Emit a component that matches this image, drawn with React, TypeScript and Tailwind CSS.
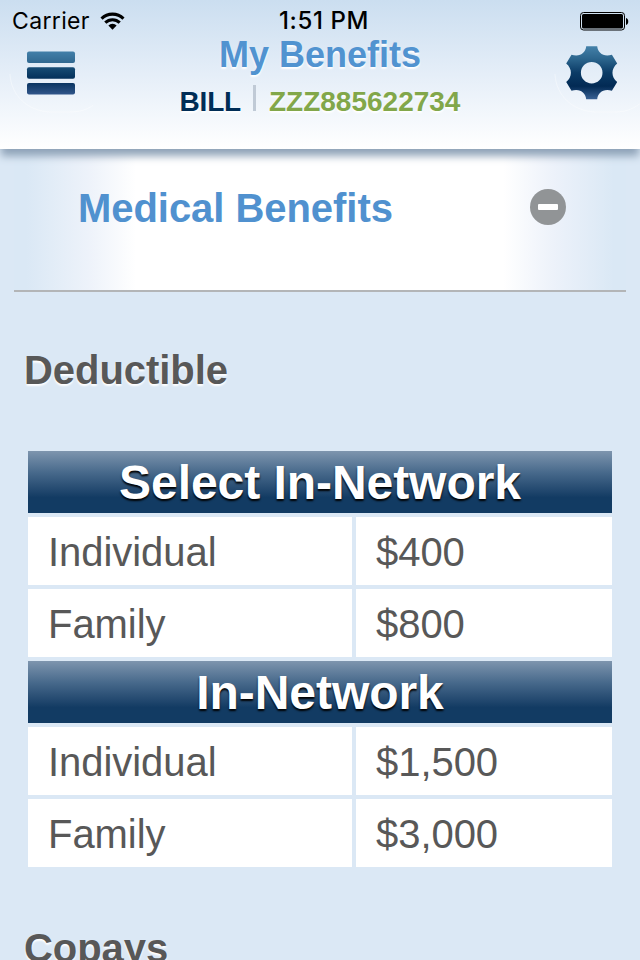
type Row = { label: string; value: string };

const groups: { title: string; rows: Row[] }[] = [
  {
    title: 'Select In-Network',
    rows: [
      { label: 'Individual', value: '$400' },
      { label: 'Family', value: '$800' },
    ],
  },
  {
    title: 'In-Network',
    rows: [
      { label: 'Individual', value: '$1,500' },
      { label: 'Family', value: '$3,000' },
    ],
  },
];

function StatusBar() {
  return (
    <div className="grid h-10 grid-cols-3 items-center pl-3 pr-2.5 font-['Inter',sans-serif] text-[23px] leading-10 text-black">
      <div className="flex items-center gap-[10px] pt-px">
        <span className="tracking-[0.35px]">Carrier</span>
        <svg width="25" height="19" viewBox="0 0 26 19" fill="none" stroke="#000" strokeWidth="3.2">
          <path d="M1.600 6.500a16.200 16.200 0 0 1 22.800 0" />
          <path d="M5.500 10.700a10.700 10.700 0 0 1 15 0" />
          <path d="M13 18l-4.300-4.400a6.200 6.200 0 0 1 8.600 0z" fill="#000" stroke="none" />
        </svg>
      </div>
      <span className="whitespace-nowrap pl-[6px] pt-px text-center text-[24px] font-medium tracking-[0.6px]">1:51 PM</span>
      <svg className="justify-self-end" width="50" height="20" viewBox="0 0 50 20">
        <rect x="0.500" y="1.500" width="44" height="17.500" rx="3" fill="none" stroke="#000" />
        <rect x="2" y="3" width="41" height="14.500" rx="1.500" fill="#000" />
        <path d="M46 7c3 .4 3 6.600 0 7z" fill="#000" />
      </svg>
    </div>
  );
}

function MenuIcon() {
  return (
    <svg width="84" height="74" viewBox="0 0 84 74">
      <defs>
        <linearGradient id="bar1" x1="0" y1="0" x2="0" y2="1">
          <stop offset="0" stopColor="#427fa9" />
          <stop offset="1" stopColor="#316890" />
        </linearGradient>
        <linearGradient id="bar2" x1="0" y1="0" x2="0" y2="1">
          <stop offset="0" stopColor="#174c75" />
          <stop offset="1" stopColor="#04305a" />
        </linearGradient>
        <linearGradient id="bar3" x1="0" y1="0" x2="0" y2="1">
          <stop offset="0" stopColor="#093461" />
          <stop offset="1" stopColor="#31568a" />
        </linearGradient>
      </defs>
      <path d="M1 34c1 22 18 37 40 38h20c14 0 23-5 30-13" fill="none" stroke="#fff" strokeOpacity="0.4" />
      <rect x="18" y="11.500" width="48" height="11.500" rx="2" fill="url(#bar1)" />
      <rect x="18" y="27.300" width="48" height="11.500" rx="2" fill="url(#bar2)" />
      <rect x="18" y="43" width="48" height="11.500" rx="2" fill="url(#bar3)" />
    </svg>
  );
}

function GearIcon() {
  return (
    <svg width="86" height="74" viewBox="0 0 86 74">
      <defs>
        <linearGradient id="gear" x1="0" y1="-27" x2="0" y2="27" gradientUnits="userSpaceOnUse">
          <stop offset="0" stopColor="#4582aa" />
          <stop offset="0.25" stopColor="#2b648c" />
          <stop offset="0.5" stopColor="#0b3b66" />
          <stop offset="0.75" stopColor="#022a54" />
          <stop offset="1" stopColor="#3b6396" />
        </linearGradient>
      </defs>
      <path d="M1 34c1 22 18 37 40 38h20c12 0 20-4 27-10" fill="none" stroke="#fff" strokeOpacity="0.4" />
      <path
        transform="translate(37.700 32.700)"
        fill="url(#gear)"
        fillRule="evenodd"
        d="M-5.500-26.500H5.500C6.200-20 11.500-15.500 20.200-18L25.500-9.300C19.200-4 19.200 4 25.500 9.300L20.200 18C11.500 15.500 6.200 20 5.500 26.500H-5.500C-6.200 20-11.500 15.500-20.200 18L-25.500 9.300C-19.200 4-19.200-4-25.500-9.300L-20.200-18C-11.500-15.500-6.200-20-5.500-26.500ZM10.800 0A10.800 10.800 0 1 0-10.800 0A10.800 10.800 0 1 0 10.800 0Z"
      />
    </svg>
  );
}

function Header() {
  return (
    <header className="relative z-10 h-[149px] bg-linear-to-b from-[#cbdef0] via-[#e5eef8] to-white shadow-[0_8px_8px_-1px_#8fa3b8]">
      <StatusBar />
      <div className="flex">
        <button type="button" aria-label="Menu" className="ml-[9px] h-[74px] w-[84px]">
          <MenuIcon />
        </button>
        <div className="flex-1 pr-[7px] text-center font-bold [text-shadow:0_2px_2px_#fff]">
          <h1 className="-mt-[3px] text-[36px] leading-9 text-[#5193d0]">My Benefits</h1>
          <div className="mt-[11px] flex items-center justify-center text-[28px] leading-9">
            <span className="tracking-[-0.2px] text-[#002d56]">BILL</span>
            <span className="mb-2 ml-3 mr-[13px] h-[26px] w-[3px] bg-[#c0cad6]" />
            <span className="text-[#82a74a]">ZZZ885622734</span>
          </div>
        </div>
        <button type="button" aria-label="Settings" className="h-[74px] w-[86px]">
          <GearIcon />
        </button>
      </div>
    </header>
  );
}

function BenefitTable() {
  return (
    <div className="mx-7 grid grid-cols-[324px_256px] gap-1 text-[40px] tracking-[-0.05px] text-[#585858]">
      {groups.map((group) => (
        <div key={group.title} className="contents">
          <div className="col-span-2 h-[62px] bg-linear-to-b from-[#7e95ae] via-[#47698b] via-35% to-[#123b63] to-75% text-center text-[48px] font-bold leading-[64px] text-white [text-shadow:0_2px_2px_#000]">
            {group.title}
          </div>
          {group.rows.map((row) => (
            <div key={row.label} className="contents">
              <div className="h-[68px] bg-white px-5 leading-[70px]">{row.label}</div>
              <div className="h-[68px] bg-white px-5 leading-[70px]">{row.value}</div>
            </div>
          ))}
        </div>
      ))}
    </div>
  );
}

export default function App() {
  return (
    <div className="h-[960px] w-[640px] overflow-hidden bg-[#dbe8f5] font-['Liberation_Sans',sans-serif]">
      <Header />
      <section className="mx-3.5 flex h-[143px] items-start justify-between border-b-2 border-[#b3b5b7] bg-[linear-gradient(to_right,#dae8f5_0,#dae8f5_2%,#edf2fa_12%,#fff_20%,#fff_80%,#edf2fa_88%,#dae8f5_98%)] pl-16 pr-[60px]">
        <h2 className="mt-9 text-[40px] font-bold leading-[46px] tracking-[-0.05px] text-[#5091cf]">Medical Benefits</h2>
        <button type="button" aria-label="Collapse" className="mt-10 flex size-9 items-center justify-center rounded-full bg-[#919496]">
          <span className="h-1.5 w-5 rounded-[1px] bg-white" />
        </button>
      </section>
      <h3 className="ml-6 mt-[55px] text-[40px] font-bold leading-[46px] tracking-[-0.05px] text-[#585858] [text-shadow:0_2px_2px_#fff]">
        Deductible
      </h3>
      <div className="mt-[58px]">
        <BenefitTable />
      </div>
      <h3 className="ml-6 mt-[58px] text-[40px] font-bold leading-[46px] tracking-[-0.05px] text-[#585858] [text-shadow:0_2px_2px_#fff]">
        Copays
      </h3>
    </div>
  );
}
